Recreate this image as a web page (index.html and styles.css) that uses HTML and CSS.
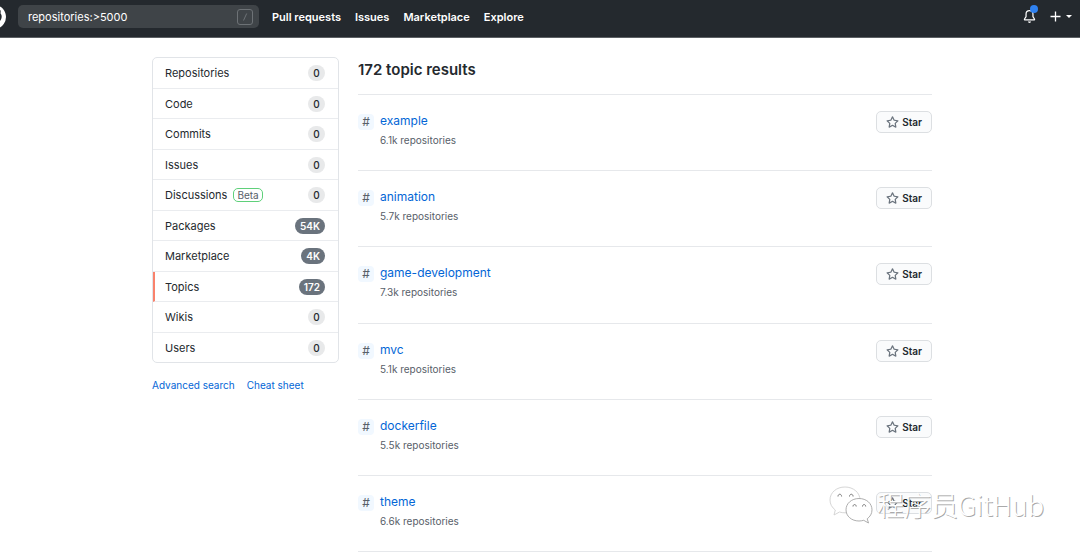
FILE: index.html
```html
<!DOCTYPE html>
<html lang="en">
<head>
  <meta charset="UTF-8">
  <title>Topic search results</title>
  <link rel="stylesheet" href="styles.css">
</head>
<body>

  <header class="header">
    <a class="logo" href="#" aria-label="Homepage">
      <svg width="24" height="24" viewBox="0 0 16 16" fill="currentColor"><path fill-rule="evenodd" d="M8 0C3.58 0 0 3.58 0 8c0 3.54 2.29 6.53 5.47 7.59.4.07.55-.17.55-.38 0-.19-.01-.82-.01-1.49-2.01.37-2.53-.49-2.69-.94-.09-.23-.48-.94-.82-1.13-.28-.15-.68-.52-.01-.53.63-.01 1.08.58 1.23.82.72 1.21 1.87.87 2.33.66.07-.52.28-.87.51-1.07-1.78-.2-3.64-.89-3.64-3.95 0-.87.31-1.59.82-2.15-.08-.2-.36-1.02.08-2.12 0 0 .67-.21 2.2.82.64-.18 1.32-.27 2-.27.68 0 1.36.09 2 .27 1.53-1.04 2.2-.82 2.2-.82.44 1.1.16 1.92.08 2.12.51.56.82 1.27.82 2.15 0 3.07-1.87 3.75-3.65 3.95.29.25.54.73.54 1.48 0 1.07-.01 1.93-.01 2.2 0 .21.15.46.55.38A8.013 8.013 0 0016 8c0-4.42-3.58-8-8-8z"/></svg>
    </a>
    <form class="search">
      <input type="text" name="q" value="repositories:&gt;5000" aria-label="Search" spellcheck="false">
      <svg class="slash" width="16" height="16" viewBox="0 0 16 16" fill="none" stroke="currentColor"><rect x=".5" y=".5" width="15" height="15" rx="2.5"/><path d="M9.7 4.5l-3.2 7"/></svg>
    </form>
    <nav class="nav">
      <a href="#">Pull requests</a>
      <a href="#">Issues</a>
      <a href="#">Marketplace</a>
      <a href="#">Explore</a>
    </nav>
    <div class="tools">
      <button class="bell" type="button" aria-label="Notifications">
        <svg width="13" height="13" viewBox="0 0 16 16" fill="currentColor"><path d="M8 16a2 2 0 001.985-1.75c.017-.137-.097-.25-.235-.25h-3.5c-.138 0-.252.113-.235.25A2 2 0 008 16z"/><path fill-rule="evenodd" d="M8 1.5A3.5 3.5 0 004.5 5v2.947c0 .346-.102.683-.294.97l-1.703 2.556a.018.018 0 00-.003.01l.001.006c0 .002.002.004.004.006a.017.017 0 00.006.004l.007.001h10.964l.007-.001a.016.016 0 00.006-.004.016.016 0 00.004-.006l.001-.007a.017.017 0 00-.003-.01l-1.703-2.554a1.75 1.75 0 01-.294-.97V5A3.5 3.5 0 008 1.5zM3 5a5 5 0 0110 0v2.947c0 .05.015.098.042.139l1.703 2.555A1.518 1.518 0 0113.482 13H2.518a1.518 1.518 0 01-1.263-2.36l1.703-2.554A.25.25 0 003 7.947V5z"/></svg>
        <span class="dot"></span>
      </button>
      <button class="add" type="button" aria-label="Create new">
        <svg width="11" height="11" viewBox="0 0 11 11" stroke="currentColor" stroke-width="1.3"><path d="M5.5.5v10M.5 5.5h10"/></svg>
        <span class="caret"></span>
      </button>
    </div>
  </header>

  <main class="page">
    <aside>
      <nav class="menu">
        <a href="#">Repositories <span class="counter">0</span></a>
        <a href="#">Code <span class="counter">0</span></a>
        <a href="#">Commits <span class="counter">0</span></a>
        <a href="#">Issues <span class="counter">0</span></a>
        <a href="#">Discussions <span class="beta">Beta</span> <span class="counter">0</span></a>
        <a href="#">Packages <span class="counter dark">54K</span></a>
        <a href="#">Marketplace <span class="counter dark">4K</span></a>
        <a class="selected" href="#">Topics <span class="counter dark">172</span></a>
        <a href="#">Wikis <span class="counter">0</span></a>
        <a href="#">Users <span class="counter">0</span></a>
      </nav>
      <div class="help">
        <a href="#">Advanced search</a>
        <a href="#">Cheat sheet</a>
      </div>
    </aside>

    <section>
      <h1>172 topic results</h1>
      <ul class="topics" id="topicList"></ul>
    </section>
  </main>

  <div class="watermark">
    <svg width="44" height="38" viewBox="0 0 44 38" fill="#fff" stroke="#ccc" stroke-width=".8" stroke-linejoin="round">
      <path d="M16 1C7.5 1 1 6.500 1 14c0 4.200 2 7.500 5.300 10L5 29l5.500-3c2 .6 3.600.8 5.500.8 8.500 0 15-5.500 15-12.800S24.500 1 16 1z"/>
      <path stroke="#999" d="M30 12.500c-7.500 0-13 5-13 11.300S22.500 35 30 35c1.600 0 3.200-.3 4.700-.7L39.500 37l-1.300-4.200c3-2.200 4.800-5.200 4.800-9 0-6.300-5.500-11.300-13-11.300z"/>
      <path fill="none" stroke="#777" stroke-width="1" d="M9 10.500c0-3 3.600-3 3.600 0M20.500 10.500c0-3 3.600-3 3.600 0M24 20.500c0-2.600 3.200-2.600 3.200 0M33.500 20.500c0-2.600 3.200-2.600 3.200 0"/>
    </svg>
    <span>程序员GitHub</span>
  </div>

  <script>
    const topicList = document.getElementById("topicList");
    const topics = [
      { name: "example", count: "6.1k" },
      { name: "animation", count: "5.7k" },
      { name: "game-development", count: "7.3k" },
      { name: "mvc", count: "5.1k" },
      { name: "dockerfile", count: "5.5k" },
      { name: "theme", count: "6.6k" }
    ];

    topics.forEach((topic) => {
      const row = document.createElement("li");
      row.innerHTML = `
        <span class="hash">#</span>
        <div class="info">
          <a href="#">${topic.name}</a>
          <p>${topic.count} repositories</p>
        </div>
        <button class="star" type="button">
          <svg width="13" height="13" viewBox="0 0 16 16" fill="currentColor"><path fill-rule="evenodd" d="M8 .25a.75.75 0 01.673.418l1.882 3.815 4.21.612a.75.75 0 01.416 1.279l-3.046 2.97.719 4.192a.75.75 0 01-1.088.791L8 12.347l-3.766 1.98a.75.75 0 01-1.088-.79l.72-4.194L.818 6.374a.75.75 0 01.416-1.28l4.21-.611L7.327.668A.75.75 0 018 .25zm0 2.445L6.615 5.5a.75.75 0 01-.564.41l-3.097.45 2.24 2.184a.75.75 0 01.216.664l-.528 3.084 2.769-1.456a.75.75 0 01.698 0l2.77 1.456-.53-3.084a.75.75 0 01.216-.664l2.24-2.183-3.096-.45a.75.75 0 01-.564-.41L8 2.694z"/></svg>
          Star
        </button>
      `;
      topicList.appendChild(row);
    });
  </script>

</body>
</html>
```
FILE: styles.css
```css
* { box-sizing: border-box; }
body { margin: 0; background: #fff; color: #24292e; font-family: Inter, "Noto Sans CJK SC", sans-serif; font-size: 11px; line-height: 20px; }
a { color: #0366d6; text-decoration: none; }
button { font-family: inherit; cursor: pointer; }
svg { display: block; flex: none; }

.header { display: flex; align-items: center; height: 38px; padding: 0 8px 4px 0; background: #24292e; border-bottom: 1px solid #5c6064; color: #fff; }
.logo { margin: 0 12px 0 -18px; color: #fff; }
.search { display: flex; align-items: center; width: 241px; height: 23px; padding: 0 6px 0 10px; background: #3f4448; border-radius: 5px; }
.search input { flex: 1; min-width: 0; padding: 0; border: 0; outline: 0; background: none; color: #fff; font-family: inherit; font-size: 11px; }
.slash { color: #6d7276; }
.nav { display: flex; gap: 14px; margin-left: 13px; }
.nav a { color: #fff; font-size: 11px; font-weight: 600; }
.tools { display: flex; align-items: center; gap: 14px; margin-left: auto; }
.tools button { display: flex; align-items: center; gap: 5px; padding: 0; border: 0; background: none; color: #fff; }
.bell { position: relative; }
.dot { position: absolute; top: -5px; right: -2px; width: 8px; height: 8px; border-radius: 50%; background: #2f81f0; }
.caret { border: 3px solid transparent; border-top-color: #fff; border-bottom: 0; }

.page { display: grid; grid-template-columns: 187px 1fr; gap: 19px; max-width: 784px; margin: 0 auto; padding: 19px 0 0 4px; }
.menu { border: 1px solid #e1e4e8; border-radius: 5px; overflow: hidden; }
.menu a { display: flex; align-items: center; padding: 5px 13px 5px 12px; border-bottom: 1px solid #eaecef; color: #24292e; font-size: 11px; }
.menu a:nth-child(even) { padding-bottom: 4px; }
.menu a:last-child { border-bottom: 0; }
.menu .selected { padding-left: 10px; border-left: 2px solid #f9826c; }
.counter { min-width: 17px; margin-left: auto; padding: 0 5px; border-radius: 8px; background: #e8e9ea; font-size: 10px; font-weight: 500; line-height: 16px; text-align: center; }
.counter.dark { background: #6a737d; color: #fff; font-weight: 600; }
.beta { margin-left: 6px; padding: 0 3px; border: 1px solid #5fd07a; border-radius: 5px; color: #586069; font-size: 10px; line-height: 12px; }
.help { display: flex; gap: 12px; margin-top: 12px; font-size: 10px; }

h1 { margin: 0; padding: 3px 0 14px; font-size: 15px; font-weight: 600; line-height: 20px; }
.topics { margin: 0; padding: 0; list-style: none; border-top: 1px solid #e6e8eb; }
.topics li { display: flex; align-items: flex-start; height: 76px; padding-top: 16px; border-bottom: 1px solid #e6e8eb; }
.topics li:nth-child(3) { height: 77px; }
.hash { width: 16px; margin: 3px 6px 0 0; border-radius: 4px; background: #f1f8ff; color: #586069; font-size: 12px; line-height: 16px; text-align: center; }
.info { flex: 1; }
.info a { display: block; font-size: 12px; }
.info p { margin: 0; color: #586069; font-size: 10px; line-height: 18px; }
.star { display: flex; align-items: center; gap: 3px; height: 22px; padding: 0 9px; border: 1px solid #dcdfe2; border-radius: 5px; background: #fafbfc; color: #24292e; font-size: 10px; font-weight: 600; }
.star svg { color: #6a737d; }

.watermark { position: absolute; right: 36px; bottom: 30px; display: flex; align-items: center; gap: 4px; color: #fff; font-family: "Noto Sans CJK SC", sans-serif; font-size: 27px; font-weight: 300; line-height: 38px; text-shadow: 1px 1px 0 #aaa; }
```
